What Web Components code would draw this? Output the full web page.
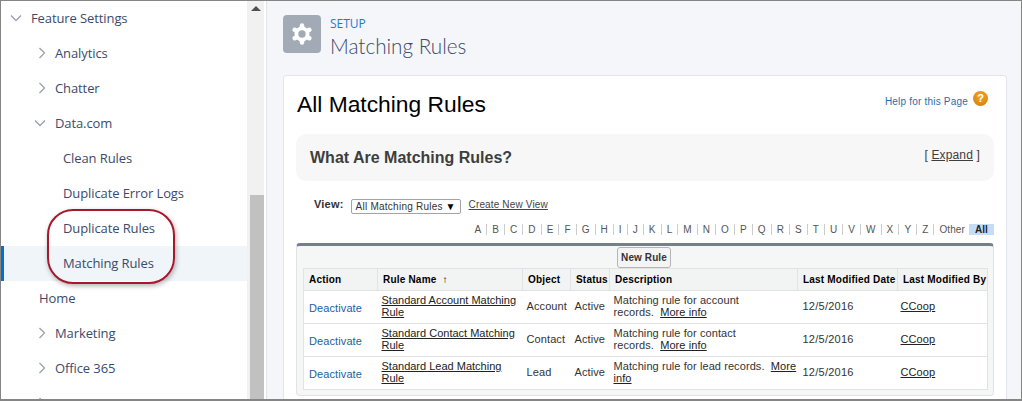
<!DOCTYPE html>
<html><head><meta charset="utf-8"><style>
html,body{margin:0;padding:0}
body{width:1022px;height:401px;overflow:hidden;font-family:"Liberation Sans",Arial,sans-serif}
</style></head><body>
<setup-app>
  <side-nav slot="nav">
    <nav-row level="0" state="open">Feature Settings</nav-row>
    <nav-row level="1" state="closed">Analytics</nav-row>
    <nav-row level="1" state="closed">Chatter</nav-row>
    <nav-row level="1" state="open">Data.com</nav-row>
    <nav-row level="2">Clean Rules</nav-row>
    <nav-row level="2">Duplicate Error Logs</nav-row>
    <nav-row level="2">Duplicate Rules</nav-row>
    <nav-row level="2" selected>Matching Rules</nav-row>
    <nav-row level="1" plain>Home</nav-row>
    <nav-row level="1" state="closed">Marketing</nav-row>
    <nav-row level="1" state="closed">Office 365</nav-row>
    <nav-row level="1" state="closed">Setup</nav-row>
  </side-nav>
  <page-head slot="main"></page-head>
  <rules-card slot="main">
    <rules-intro></rules-intro>
    <view-bar></view-bar>
    <alpha-filter></alpha-filter>
    <rules-table></rules-table>
  </rules-card>
</setup-app>
<script>
function el(name, html){
  customElements.define(name, class extends HTMLElement{
    connectedCallback(){
      if(this.shadowRoot) return;
      this.attachShadow({mode:'open'}).innerHTML = typeof html==='function'?html(this):html;
    }
  });
}
el('setup-app',`<style>
:host{display:flex;width:1022px;height:401px;box-sizing:border-box;border:1px solid #858585;border-width:1px 1px 2px 1px;background:#f4f6f9;overflow:hidden;position:relative}
.nav{flex:0 0 246px;background:#fff;overflow:hidden;height:100%}
.bar{flex:0 0 19px;box-sizing:border-box;background:linear-gradient(90deg,#f1f1f1 0,#f1f1f1 17px,#fff 17px);padding-top:194px;height:100%;position:relative}
.thumb{margin-left:3px;width:14px;height:300px;background:#c1c1c1}
.up{position:absolute;left:4px;top:5px;width:0;height:0;border:solid transparent;border-width:0 5.5px 5px;border-bottom-color:#505050}
.rule{flex:0 0 1px;background:#e3e5ea}
.main{flex:1;min-width:0;padding:14px 14px 0 16px;display:flex;flex-direction:column;gap:22px;box-sizing:border-box;height:100%}
.mark{position:absolute;left:46px;top:208px;width:128px;height:75px;box-sizing:border-box;border:2px solid #a8182d;border-radius:26px;box-shadow:1px 2px 5px rgba(0,0,0,.3)}
</style>
<div class="nav"><slot name="nav"></slot></div>
<div class="bar"><div class="up"></div><div class="thumb"></div></div><div class="rule"></div>
<div class="main"><slot name="main"></slot></div><div class="mark"></div>`);
el('side-nav',`<style>:host{display:block}</style><slot></slot>`);
customElements.define('nav-row', class extends HTMLElement{
  connectedCallback(){
    if(this.shadowRoot) return;
    const lvl=+this.getAttribute('level'), st=this.getAttribute('state'), sel=this.hasAttribute('selected'), plain=this.hasAttribute('plain');
    const left={0:30,1:54,2:62}[lvl];
    let icon='';
    if(st){
      const ix=lvl===0?10:34;
      icon=`<svg style="position:absolute;left:${(st==='open'?ix-1:ix+1)}px;top:11px" width="12" height="12" viewBox="0 0 12 12" fill="none" stroke="#98a1ad" stroke-width="1.3">${st==='open'?'<path d="M1 3.5l5 5 5-5"/>':'<path d="M3.5 1l5 5-5 5"/>'}</svg>`;
    }
    this.attachShadow({mode:'open'}).innerHTML=`<style>
    :host{display:block;height:35px;position:relative;box-sizing:border-box;${sel?'background:#eff5f9;border-left:3px solid #0070d2;':''}
      font:13px/35px "Open Sans",sans-serif;letter-spacing:-.1px;color:#3c4a6b;white-space:nowrap}
    .t{padding-left:${(plain?38:left)-(sel?3:0)}px;display:block}
    </style>${icon}<span class="t"><slot></slot></span>`;
  }
});
el('page-head',`<style>
:host{display:flex;align-items:flex-start;gap:9px;height:38px;flex:none}
.i{width:38px;height:38px;border-radius:4px;background:#a2abb5;display:flex;align-items:center;justify-content:center}
.s{font:12px/14px "Open Sans",sans-serif;color:#1b78e0;margin-top:2px}
.h{font:300 20.7px/22px "Lato",sans-serif;color:#3c4a6b;margin-top:4px}
.t{display:flex;flex-direction:column}
</style><div class="i"><svg width="24" height="24" viewBox="0 0 24 24" fill="none" stroke="#fff"><circle cx="12" cy="12" r="5.600" stroke-width="3.800"/><g stroke-width="4.500" stroke-linecap="round"><path d="M12 3.500v1.500"/><path d="M12 20.500v-1.500"/><path d="M4.640 7.750l1.300 .75"/><path d="M19.360 7.750l-1.300 .75"/><path d="M4.640 16.250l1.300-.75"/><path d="M19.360 16.250l-1.300-.75"/></g></svg></div>
<div class="t"><div class="s">SETUP</div><div class="h">Matching Rules</div></div>`);
el('rules-card',`<style>
:host{display:block;background:#fff;border:1px solid #e2e5ec;border-bottom:0;border-radius:4px 4px 0 0;box-sizing:border-box;flex:1;padding:14px 12px 0 12px;min-height:0;color:#000}
.top{display:flex;justify-content:space-between;height:29px;padding-left:1px;margin-bottom:15px}
h1{margin:0;font:400 22.8px/29px "Liberation Sans",sans-serif}
.help{display:flex;gap:5px;align-items:flex-start;font-size:10px;color:#1b6fb5;letter-spacing:.2px;padding-right:6px}
.help span{margin-top:6px;line-height:12px}
.q{width:15px;height:15px;margin-top:1px;border-radius:50%;background:radial-gradient(circle at 50% 35%,#f5a623,#d07a0a);color:#fff;font:700 11px/15px "Liberation Sans";text-align:center;letter-spacing:0}
</style><div class="top"><h1>All Matching Rules</h1><div class="help"><span>Help for this Page</span><div class="q">?</div></div></div><slot></slot>`);
el('rules-intro',`<style>
:host{display:flex;justify-content:space-between;align-items:center;height:47px;background:#f7f7f7;border-radius:10px;padding:0 14px;color:#3e3e3c}
b{font-size:16px}
.e{font-size:12px;margin-top:-5px;letter-spacing:.15px}
u{text-underline-offset:1px}
</style><b>What Are Matching Rules?</b><span class="e">[ <u>Expand</u> ]</span>`);
el('view-bar',`<style>
:host{display:flex;align-items:center;height:20px;margin-top:15px;padding-left:18px;font-size:11px;color:#333;letter-spacing:.1px}
b{color:#333;margin-right:7px;letter-spacing:.2px;margin-top:-4px}
.sel{box-sizing:border-box;height:15px;width:110px;border:1px solid #a4a4a4;border-radius:2px;font-size:10px;line-height:13px;padding:0 4px;display:flex;justify-content:space-between;color:#333;letter-spacing:.25px}
.sel span:last-child{color:#000}
u{margin-left:8px;font-size:10px;letter-spacing:.15px;color:#444;margin-top:-4px}
</style><b>View:</b><div class="sel"><span>All Matching Rules</span><span>▼</span></div><u>Create New View</u>`);
el('alpha-filter',()=>{
  const ls='ABCDEFGHIJKLMNOPQRSTUVWXYZ'.split('');
  return `<style>
:host{display:flex;justify-content:flex-end;align-items:center;height:11px;margin-top:8px;font-size:10px;line-height:11px;color:#555}
span{padding:0 5px;border-right:1px solid #ccc;line-height:11px;letter-spacing:.1px}
.o{border:0;padding:0 4px 0 5px}
.a{background:#c5dcf7;font-weight:700;color:#222;padding:0 6px;border:0}
</style>${ls.map(l=>`<span>${l}</span>`).join('')}<span class="o">Other</span><span class="a">All</span>`;
});
el('rules-table',()=>{
  const row=(n,o,d,m)=>`<tr><td class="d"><a>Deactivate</a></td><td class="n"><u>${n}</u></td><td>${o}</td><td>Active</td><td class="ds">${d}&nbsp;&nbsp;<u>${m}</u></td><td class="dt">12/5/2016</td><td class="b"><u>CCoop</u></td></tr>`;
  return `<style>
:host{display:block;margin-top:8px;box-sizing:border-box;height:153px;background:#f5f6f6;border:1px solid #e0e3e5;border-top:3px solid #747e96;border-radius:4px;padding:1px 6px 0;font-size:11px;letter-spacing:.1px;color:#333}
.btn{display:block;box-sizing:border-box;margin:0 auto;width:54px;height:21px;font:700 10px/19px "Liberation Sans";text-align:center;border:1px solid #b5b5b5;border-radius:3px;background:#f4f4f4;color:#333;letter-spacing:.1px;transform:translateX(-1px)}
table{border-collapse:collapse;table-layout:fixed;width:684px;background:#fff;border:1px solid #e0e3e5}
th{height:22px;padding:0 0 0 5px;text-align:left;background:#f2f3f3;border-right:1px solid #e0e3e5;border-bottom:1px solid #e0e3e5;font-size:10px;color:#000;letter-spacing:.2px;white-space:nowrap;box-sizing:border-box}
th:last-child{border-right:0}
td{height:33px;box-sizing:border-box;padding:0 2px 2px 4px;border-bottom:1px solid #e3e3e3;line-height:12px;vertical-align:middle}
td.d{padding:1px 0 0 5px}
td.n{letter-spacing:0}
td.ds{padding-right:0;letter-spacing:.08px}
td.dt{padding-left:5px;letter-spacing:.25px}
td.b{padding-left:3px}
a{color:#1b5f9e}
u{color:#222}
</style><span class="btn">New Rule</span><table>
<colgroup><col style="width:74px"><col style="width:145px"><col style="width:48px"><col style="width:39px"><col style="width:188px"><col style="width:100px"><col style="width:90px"></colgroup>
<tr><th>Action</th><th>Rule Name &nbsp;↑</th><th>Object</th><th>Status</th><th>Description</th><th>Last Modified Date</th><th>Last Modified By</th></tr>
${row('Standard Account Matching Rule','Account','Matching rule for account records.','More info')}
${row('Standard Contact Matching Rule','Contact','Matching rule for contact records.','More info')}
${row('Standard Lead Matching Rule','Lead','Matching rule for lead records.','More info')}
</table>`;
});
</script>
</body></html>
